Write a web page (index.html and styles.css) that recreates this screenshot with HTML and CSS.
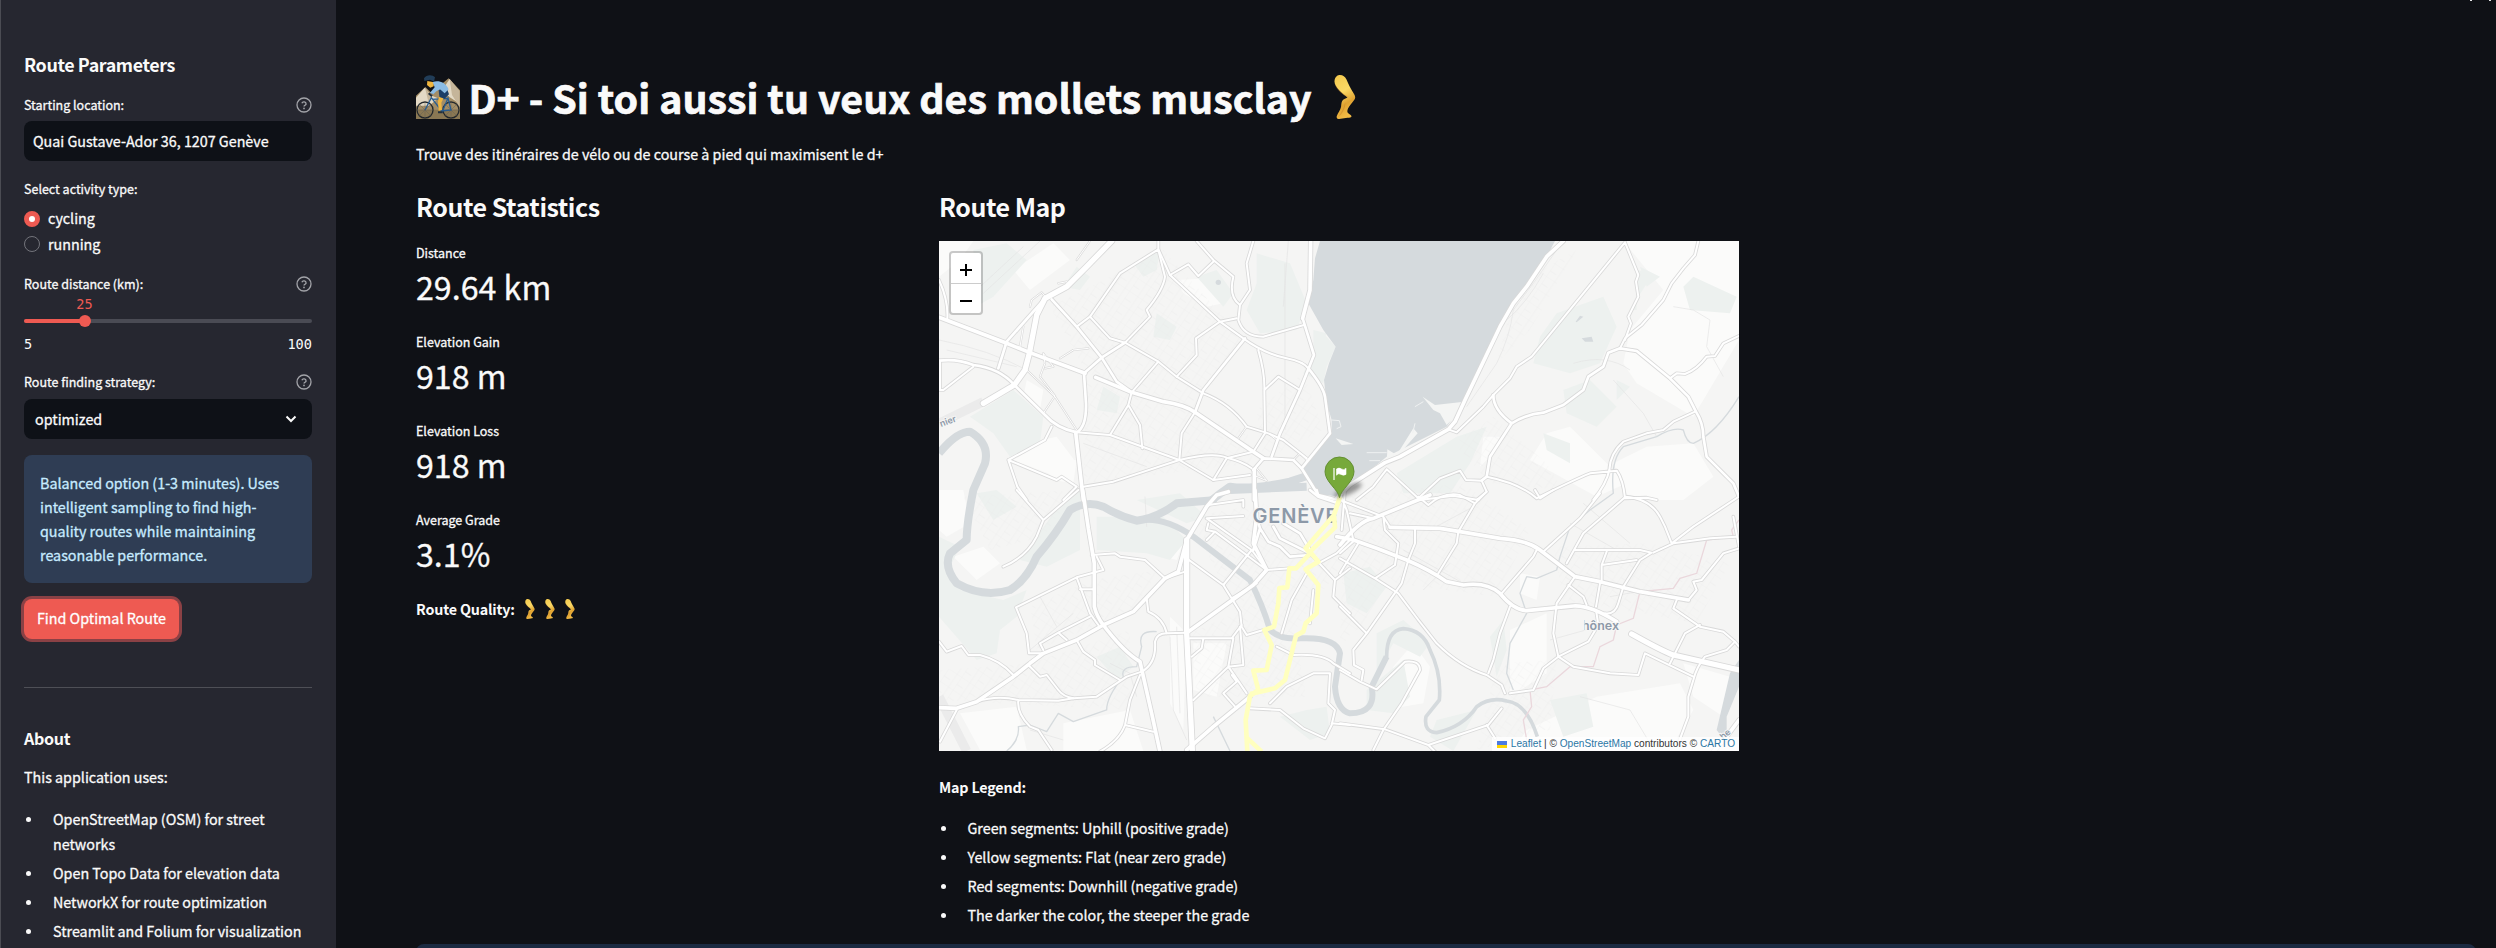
FILE: index.html
```html
<!DOCTYPE html>
<html lang="fr">
<head>
<meta charset="utf-8">
<title>D+ - Route planner</title>
<link rel="stylesheet" href="styles.css">
</head>
<body>
<svg class="defs" aria-hidden="true">
  <defs>
    <linearGradient id="skin" x1="0" y1="0" x2="0.3" y2="1"><stop offset="0" stop-color="#f3c84c"/><stop offset=".45" stop-color="#fbd965"/><stop offset=".75" stop-color="#e0a332"/><stop offset="1" stop-color="#f0b944"/></linearGradient>
    <symbol id="leg" viewBox="0 0 44 44">
      <path fill="url(#skin)" d="M11.500 6C12 1 15 0 17 0c3 0 5 1.500 6.500 4.500 2 5 4 9 7.500 14.500 1.500 2.500 1.500 4 .5 5.500-2 3-5 6-6.500 9-.8 2-1 3.500 0 4.500 1.500 1.500 3.500 2 3.500 3.500 0 1-2 1.200-4 1.200L16 44c-2 .1-2.700-1.500-2.200-3 1-3 3.700-6 4.200-9 .5-4 .5-6 2.500-7.500l4-2C20 19 11 12 11.500 6z"/>
      <path fill="#bd7926" opacity=".4" d="M15 42c4-5 6-10 7.500-15-.5 7-3 12-7.500 15zM12 9c3 6 8 10 14 13-5-1-13-7-14-13z"/>
    </symbol>
    <symbol id="help" viewBox="0 0 16 16">
      <circle cx="8" cy="8" r="7" fill="none" stroke="#a3a4a9" stroke-width="1.300"/>
      <path d="M5.900 6.300A2.150 2.150 0 0 1 10.100 6.900C10.100 8.200 8 8.300 8 9.500" fill="none" stroke="#a3a4a9" stroke-width="1.300"/>
      <circle cx="8" cy="11.400" r=".85" fill="#a3a4a9"/>
    </symbol>
  </defs>
</svg>
<div class="app">
  <aside class="sidebar">
    <h2 class="side-title">Route Parameters</h2>
    <div class="label-row location"><span>Starting location:</span><svg class="help"><use href="#help"/></svg></div>
    <div class="field">Quai Gustave-Ador 36, 1207 Genève</div>
    <div class="label-row activity"><span>Select activity type:</span></div>
    <div class="radio first"><i class="dot on"></i><span>cycling</span></div>
    <div class="radio"><i class="dot"></i><span>running</span></div>
    <div class="label-row distance"><span>Route distance (km):</span><svg class="help"><use href="#help"/></svg></div>
    <div class="slider">
      <div class="slider-value">25</div>
      <div class="track"><i class="fill"></i><i class="thumb"></i></div>
      <div class="ticks"><span>5</span><span>100</span></div>
    </div>
    <div class="label-row strategy"><span>Route finding strategy:</span><svg class="help"><use href="#help"/></svg></div>
    <div class="field select"><span>optimized</span><svg class="chevron" viewBox="0 0 12 8"><path d="M1.500 1.500 6 6 10.500 1.500"/></svg></div>
    <div class="info">Balanced option (1-3 minutes). Uses<br>intelligent sampling to find high-<br>quality routes while maintaining<br>reasonable performance.</div>
    <button class="find">Find Optimal Route</button>
    <hr class="rule">
    <h3 class="about">About</h3>
    <p class="uses">This application uses:</p>
    <ul class="list">
      <li>OpenStreetMap (OSM) for street<br>networks</li>
      <li>Open Topo Data for elevation data</li>
      <li>NetworkX for route optimization</li>
      <li>Streamlit and Folium for visualization</li>
    </ul>
  </aside>
  <main class="main">
    <div class="toolbar"><i></i><i></i></div>
    <h1 class="title">
      <svg class="bike" viewBox="0 0 132 132">
        <path fill="#a38d66" d="M0 62 28 36 50 58 76 28 98 10 132 46V132H0z"/>
        <path fill="#e3d9c5" d="M0 68 26 38 48 62 66 70 40 92H0zM78 46 101 12 120 48 128 84 100 66z"/>
        <path fill="#c5b59a" d="M27 38 47 64 38 84zM101 12 131 48V96L108 60z"/>
        <path fill="#8a7853" d="M0 104H132V132H0z"/>
        <g fill="none" stroke="#24292d" stroke-width="4"><circle cx="27" cy="105" r="24"/><circle cx="105" cy="105" r="24"/></g>
        <g fill="none" stroke="#5b5d58" stroke-width="1.200"><path d="M3 105H51M27 81V129M10 88 44 122M10 122 44 88M81 105H129M105 81V129M88 88 122 122M88 122 122 88"/></g>
        <path d="M27 105 46 68 79 110 96 69 105 105 77 108 50 73 94 70" fill="none" stroke="#285d91" stroke-width="4"/>
        <path fill="#f0b63e" d="M34 18 54 22 53 34 43 38 33 30zM70 58 86 62 76 83 78 105 68 107 66 80z"/>
        <path fill="#1d3f67" d="M68 44 92 38 99 58 86 71 70 66z"/>
        <path fill="#8bbce4" d="M50 21C66 16 88 20 98 43L86 55 72 43 61 49 52 58 42 53 56 37z"/>
        <path fill="#213d58" d="M24 10C31-2 50-1 57 7L54 20 42 14 25 18z"/>
        <path d="M38 55 48 64M66 112H80" stroke="#22303d" stroke-width="6"/>
      </svg>
      <span>D+ - Si toi aussi tu veux des mollets musclay</span>
      <svg class="leg-big"><use href="#leg"/></svg>
    </h1>
    <p class="subtitle">Trouve des itinéraires de vélo ou de course à pied qui maximisent le d+</p>
    <div class="columns">
      <section class="stats">
        <h2 class="section-title">Route Statistics</h2>
        <div class="metric"><div class="metric-label">Distance</div><div class="metric-value">29.64 km</div></div>
        <div class="metric"><div class="metric-label">Elevation Gain</div><div class="metric-value">918 m</div></div>
        <div class="metric"><div class="metric-label">Elevation Loss</div><div class="metric-value">918 m</div></div>
        <div class="metric"><div class="metric-label">Average Grade</div><div class="metric-value">3.1%</div></div>
        <div class="quality"><span>Route Quality:</span><svg><use href="#leg"/></svg><svg><use href="#leg"/></svg><svg><use href="#leg"/></svg></div>
      </section>
      <section class="map-col">
        <h2 class="section-title">Route Map</h2>
        <div class="map">
          <svg class="tiles" viewBox="0 0 800 510">
            <defs>
              <clipPath id="tile-edge"><rect x="645.500" y="360" width="80" height="40"/></clipPath>
              <pattern id="blocks" width="46" height="46" patternUnits="userSpaceOnUse" patternTransform="rotate(34)"><path d="M0 0H46M0 0V46M0 27H22M31 0V46" fill="none" stroke="#e9e9e9" stroke-width="1"/></pattern>
              <g id="roads">
                <g transform="translate(-9 -11) scale(.33333)">
                  <path class="r4" d="M545 33 470 110 410 170 345 205 320 255 298 370 285 420 253 465 160 520"/>
                  <path class="r3" d="M27 262 230 340 300 368 465 430M497 442 605 487 700 515Q765 525 795 547L970 665 1000 685"/>
                  <path class="r2" d="M365 208 440 290 515 383 560 455 605 487M345 205 230 335 205 415"/>
                  <path class="r2" d="M27 392Q80 385 130 405 210 415 253 465L345 555Q380 595 440 607 470 590 468 520L462 430 515 383 585 338"/>
                  <path class="r1" d="M585 338 660 260 650 240Q700 180 705 140L685 60V33M440 290 480 260 570 130 685 58"/>
                  <path class="r1" d="M685 58 720 135 870 275 940 325Q1000 370 1070 385 1120 395 1135 415"/>
                  <path class="r2" d="M1135 415Q1180 470 1185 500L1200 610 1115 715"/>
                  <path class="r1" d="M480 260 540 325 585 338 685 395 740 440 820 490Q900 520 950 590L1015 610 1060 630 1130 685"/>
                  <path class="r1" d="M720 135 775 103 805 138 850 95M800 33 850 90 910 140Q895 200 930 225L925 270Q940 320 1000 320L1122 285M970 33 950 100 960 180 930 225"/>
                  <path class="r3" d="M1142 33 1140 180 1118 265"/>
                  <path class="r2" d="M1118 265 1152 375 1110 480 1050 610 1025 680"/>
                  <path class="r1" d="M740 440 800 375 798 325 870 275 920 265M605 487 685 395M748 690 755 610 795 547"/>
                  <path class="r2" d="M945 325 820 480 795 547"/>
                  <path class="r1" d="M605 487 595 525 630 585 637 655M595 525 540 615M440 607 540 615 748 690 850 750M460 770 550 755 748 690Q850 665 890 683 940 695 965 715"/>
                  <path class="r3" d="M437 607 460 810M973 718V810"/>
                  <path class="r1" d="M365 590 345 630 235 690 262 770 290 810M235 690 380 750 395 740 440 770 400 810M30 480 40 480 130 410M30 480V395"/>
                  <path class="r1" d="M985 360Q1005 430 1003 480L1005 610 970 665 890 685 850 750 960 735M1003 480 1045 440 1110 480M27 150Q55 210 52 265"/>
                  <path class="r2" d="M970 720 1000 685 1090 690 1115 715 1165 795 1225 810"/>
                  <path class="r0" d="M340 550 375 498 330 440 345 400 340 370 370 410 345 415M390 385 430 360 475 355M300 230 305 210 335 187 350 205M385 160 410 155M280 290 270 350M290 420 375 500 440 600M925 625 950 590M1015 610 1040 630M1090 690 1110 670 1130 690M480 33 440 90M970 735 1010 752 980 715"/>
                </g>
                <g transform="translate(401 -11) scale(.33333)">
                  <path class="r3" d="M670 33 620 80 560 170 520 220 480 290 375 510 345 575 325 598 180 680 135 698 30 765-10 805"/>
                  <path class="r1" d="M855 37 575 380 530 410 510 445 460 495 430 530 350 607 325 598M855 37 895 135 888 155 895 200 865 260 873 280 855 330"/>
                  <path class="r1" d="M1075 33 1065 75 1030 115 995 160 970 210 905 285 855 325 840 355"/>
                  <path class="r2" d="M460 495Q460 540 515 580M840 355 805 368 790 410 745 440 730 480 670 525 610 548Q560 552 515 580L450 680 440 740 425 752M840 355 890 363 990 445 1045 500 1068 545Q1090 580 1090 620L1100 680 1180 760 1197 800"/>
                  <path class="r1" d="M990 445 1010 430 1035 432Q1070 420 1100 380L1125 378 1150 340 1197 318M1065 545 1000 575 970 600 920 610 850 635Q810 670 808 720"/>
                  <path class="r1" d="M140 718 235 805 300 745 360 722 378 750 425 752 440 785 410 810M50 810 100 770 140 718M440 740Q540 760 590 805 700 750 750 730L830 722Q850 750 855 805M808 720Q800 760 760 810M240 810 340 797 415 810M855 805 920 803 950 810"/>
                </g>
                <g transform="translate(-9 249) scale(.33333)">
                  <path class="r3" d="M458 0 475 115 493 220V350Q500 380 520 405 580 485 630 515L640 560 665 670 690 785"/>
                  <path class="r4" d="M770 150V430L787 780"/>
                  <path class="r3" d="M975 0 980 80 970 160 1010 240 970 285 775 425M27 653 80 655 140 635 250 560 300 520 340 490 440 450 520 405 610 365 705 265 745 245 770 150 830 50 860 15 895 5M770 780 850 710 960 620"/>
                  <path class="r1" d="M260 0 340 90 445 0M340 90 320 140Q290 200 220 230M485 195 555 190 570 200 645 210 705 265 765 245M500 200 520 240 440 262 258 352 290 430 297 490 340 490M440 262 480 370 505 405"/>
                  <path class="r1" d="M450 298H490M340 480 330 460 385 428 480 380M385 428 410 450M440 450 460 485 495 510 495 525 570 570M27 455 50 485 95 468 115 495 150 495Q210 510 250 555M295 525 330 560 350 555 385 600Q400 620 430 625L500 620 590 560 635 545Q680 520 675 455 680 430 710 430L770 428"/>
                  <path class="r1" d="M140 635Q200 615 265 630L385 632 430 625M265 630Q260 670 300 710L325 720 365 780M630 555 600 630 585 705Q570 750 510 785M585 705 670 725M80 660 30 755M650 325 655 365Q700 385 710 430"/>
                  <path class="r1" d="M770 205 880 285 965 180 830 85 940 78M880 285 930 365 935 410 950 435 1000 420M905 325 980 280M835 100 830 120 855 125 830 150M855 125 970 210 1010 240M835 45 940 30 940 50M965 180 1010 240 1080 235"/>
                  <path class="r1" d="M780 445 905 445 935 405M820 445 815 475 785 500M790 630 895 530 940 525 930 410M895 530 950 610M905 555 920 575 880 610 920 655M910 445 895 530"/>
                  <path class="r2" d="M980 80 990 115 1015 155 1050 170 1080 200 1140 195M990 115 970 180M1030 110 1050 145 1140 190M1060 100 1110 130 1140 180M1140 0 1165 20 1225 40M1165 20 1160 0"/>
                  <path class="r1" d="M1055 430 1085 330 1130 250M1150 300 1140 400M1090 495 1040 470M1090 495Q1180 490 1210 520L1260 550M960 655 1050 660 1120 715 1185 745 1205 705 1215 660 1195 640 1200 550 1150 550 1070 590 1020 640M1140 190 1215 270 1210 320 1260 370M1165 220 1220 190 1260 150M1215 270 1260 235M1205 700 1260 705"/>
                </g>
                <g transform="translate(401 249) scale(.33333)">
                  <path class="r3" d="M-10 140 40 150 110 175 200 210Q270 240 320 275L370 285Q440 275 480 310 520 360 560 362L700 348Q750 345 830 395"/>
                  <path class="r4" d="M875 432Q970 485 1000 495L1197 540"/>
                  <path class="r3" d="M0 165Q60 90 100 85L270 15M150 112 300 115 360 125 480 145Q560 150 600 180L705 260 780 275 900 305 1045 330"/>
                  <path class="r1" d="M0 30 130 80 150 112M235 20 265 45Q310 5 360 15L405 40 355 125 350 160 295 250M440 5 405 40M225 115 225 160 205 210 185 280 80 430 40 480 42 525 70 540 65 570M130 80 135 120 175 160 165 225 105 265M0 205 105 265 175 310 235 390 290 460Q360 530 440 555L485 585 495 610M0 350 80 430"/>
                  <path class="r1" d="M510 350 480 430 460 510 445 550M485 310 580 200 590 180M610 185 720 85 780 10M705 260 650 340 640 430 655 500 610 535 580 600 510 610M655 500 745 455 775 405 768 360"/>
                  <path class="r1" d="M680 220 730 130 855 22M705 180H900L935 188 900 210 850 290 835 340Q825 375 795 370M785 275V225L890 210M800 185 785 225M780 280 768 350M685 285 730 320 740 345M585 0 600 25 640 0"/>
                  <path class="r1" d="M855 20Q930 25 960 80L975 110 995 160 1060 110 1197 20M940 188 1000 160 1110 145 1190 140M1045 330 1070 300 1060 275 1085 270 1150 190 1197 175M1010 330 1000 355 1080 410 1150 425 1185 455 1197 470M1185 455 1160 480 1095 500Q1070 530 1060 570L1045 620 1045 680 1015 760M1080 405 1035 430 1000 500 990 520"/>
                  <path class="r1" d="M655 500 700 530 810 550 895 555 915 490 1060 560M0 540 60 575 110 598 195 515Q240 510 240 540L185 640 130 720 100 780M0 700 135 718 265 765 445 705 485 655M265 765 285 785M440 705 465 745M-5 0 20 60 40 150M15 0 5 120M30 70 100 85M55 160 0 250M0 190 45 150M1180 80 1197 170"/>
                  <path class="r3" d="M1197 690 1160 740 1120 785"/>
                </g>
              </g>
            </defs>
            <rect width="800" height="510" fill="#f5f5f4"/>
            <g transform="translate(-9 -11) scale(.33333)">
              <g fill="#fbfbfa">
                <path d="M27 33H130L90 90 27 140zM250 120 370 40 420 90 300 180zM740 150 840 145 880 220 830 230 760 190zM290 450 340 480 330 540 280 500zM290 640 380 620 440 700 380 740 250 690z"/>
                <path d="M2080 33H2427V330L2290 560 2120 460 2080 400 2100 300 2200 180zM1850 610 1920 590 2090 760 2000 800 1800 690zM2050 700 2150 650 2290 640 2350 740 2260 810H2100zM1660 620 1710 620 1700 660 1650 710z"/>
                <path d="M27 780H100L120 880 50 920 27 900zM70 980 160 950 210 1000 140 1050zM330 690H440L430 760 370 750zM650 930 720 900 760 940 740 990 660 970zM720 1160 770 1210 760 1500 720 1420zM790 1240H890L860 1400 790 1380zM90 1450 260 1430 290 1560H150zM400 1480 600 1440 640 1563H400z"/>
                <path d="M1390 1310 1450 1240 1500 1310 1480 1420 1360 1440zM1740 1200 1850 1150 1850 1330 1740 1400zM1790 1500 2000 1400 2250 1360 2290 1440 2220 1560H1750zM2260 1300 2400 1340 2380 1460 2290 1400zM1770 1030 1830 1040 1820 1110 1770 1090z"/>
              </g>
              <g fill="#edf1ef">
                <path d="M130 60 230 40 290 90 190 200 120 240 60 220 130 140zM610 100 690 60 680 120 640 140zM800 140 860 120 910 190 880 230zM980 70 1080 100 1130 220 1100 300 990 310 950 240 980 160zM1120 430 1180 310 1217 350 1190 410 1180 460zM1150 300 1190 310 1150 420z"/>
                <path d="M120 560 250 480 340 560 330 640 240 680 190 610zM440 110 480 140 450 180 400 170zM680 250 740 290 720 330 670 320zM520 470 570 500 560 550 500 540z"/>
                <path d="M1880 250 2020 200 2060 290 2010 400 1920 430 1810 400 1830 320zM2120 120 2170 130 2100 240 2120 240zM2290 140 2420 200 2400 250 2280 240 2260 170zM1900 480 1980 450 2060 530 2000 590 1910 550zM1840 610 1920 640 1920 700 1850 660zM1580 620 1670 590 1620 700 1560 790 1420 790 1400 730zM2130 110 2190 140 2150 170zM2060 450 2100 470 2060 510z"/>
                <path d="M27 920 90 950 60 1010 90 1080 220 1110 290 1080 260 1160 210 1200 200 1270 140 1290 27 1160zM270 990 370 850 450 780 450 960 350 1010zM500 860 700 860 770 930 720 990 650 970 500 960zM620 810 750 790 830 860 770 880zM140 790 200 780 260 830 190 870zM500 1280 570 1250 610 1310 560 1350z"/>
                <path d="M1240 1030 1320 1010 1370 1070 1310 1150 1250 1120zM1340 1210 1420 1170 1500 1240 1470 1280 1390 1240 1340 1330zM1310 1380 1420 1290 1440 1400 1390 1450 1310 1440zM1680 1220 1720 1170 1730 1260 1700 1340zM1860 1410 1970 1390 1990 1490 1900 1520zM1520 1470 1640 1440 1570 1563 1500 1520zM1130 1440 1190 1430 1200 1510 1140 1530 1050 1460z"/>
              </g>
              <g fill="url(#blocks)">
                <path d="M360 230 700 60 940 325 800 540 470 430zM470 450 950 600 970 700 460 760z"/>
                <path d="M980 540 1120 430 1180 600 1000 690zM780 860 1000 820 1240 1000 1080 1220 900 1110zM780 1210 1070 1080 1130 1400 800 1400z"/>
                <path d="M27 1320 300 1300 600 1200 600 1440 27 1410zM100 800 440 780 340 920 180 960zM300 1130 480 1050 690 1020 610 1140 320 1260z"/>
                <path d="M1230 800 1600 760 1800 900 1700 1100 1400 1060 1230 920zM1240 920 1400 1010 1300 1180 1230 1250zM1870 950 2160 940 2400 1000 2300 1180 1900 1110zM1700 1300 1880 1290 1860 1500 1640 1560z"/>
                <path d="M1570 640 1690 560 1850 700 1900 780 1680 760zM1760 160 1940 60 1800 300 1700 400z"/>
              </g>
              <g fill="none" stroke="#e4e4e4" stroke-width="2">
                <path d="M160 190 330 33M140 180 280 50M27 330Q180 360 290 420M50 360 260 410M1065 100V600M1075 33 1060 230M1880 60Q1820 150 1750 240 1740 320 1700 400L1610 530M1840 130Q1790 220 1730 270M2230 230 2290 240 2340 270 2330 350 2380 440M1930 400Q2030 370 2100 420M2050 450 2140 550 2180 620"/>
                <path d="M460 640 650 710M720 1220 730 1440 770 1530M740 1190 750 1450M650 890 645 800M430 1150 300 1260M330 1100 380 1190M540 1300 600 1330 620 1400M300 1500 400 1530M1420 960 1600 1060M1500 900 1630 830M1480 1080 1560 1000M1920 880 2060 960M1960 820 2100 940M2040 1100 2150 1080M1860 1230 2040 1180M1950 1400 2100 1440 2160 1540"/>
              </g>
              <path fill="#d5dadd" d="M1170 33 1155 85 1150 150 1135 220 1180 300 1217 350 1197 400 1182 450 1190 520 1205 570 1205 610 1115 715 1140 745 1168 793 1230 800 1270 762 1370 680 1550 590 1605 510 1710 290 1750 220 1850 80 1875 33z"/>
              <path fill="#f4f5f4" d="M1478 500 1515 525 1602 515 1575 560 1550 585 1530 550 1510 540zM1450 595 1463 610 1410 670 1370 700 1372 658 1400 675zM1217 625 1270 642 1235 645z"/>
              <path fill="none" stroke="#eff1f1" stroke-width="3" d="M1310 668H1370M1318 692H1350M1205 570 1228 572 1233 590 1220 596M1455 530 1480 515M1448 610 1455 580M1720 260 1735 255"/>
              <g fill="none" stroke="#d5dadd" stroke-linejoin="round">
                <path stroke-width="24" d="M27 670Q80 605 120 605 180 640 165 700L130 780Q110 880 110 930L60 970Q40 1010 80 1060 160 1105 240 1080 290 1050 320 980 380 910 420 840 470 810 520 830 570 860 620 872 680 865 740 820L860 810"/>
                <path stroke-width="18" d="M640 870Q710 865 790 920L960 1050Q1000 1130 1020 1200 1050 1230 1110 1225 1220 1220 1230 1270L1215 1370Q1220 1440 1260 1450 1340 1450 1325 1370L1370 1280"/>
                <path stroke-width="11" d="M1325 1375 1370 1280Q1370 1200 1420 1196 1480 1200 1500 1260 1535 1330 1528 1410L1488 1460Q1480 1505 1520 1508 1600 1490 1640 1430 1680 1400 1730 1413 1790 1420 1822 1520"/>
                <path stroke-width="24" d="M1140 735 1080 755Q960 780 900 770 870 790 840 815M900 780 1130 770"/>
                <path stroke-width="4" d="M230 1563Q270 1530 265 1490L300 1485 350 1505 385 1450 430 1475 530 1440Q530 1400 580 1340 570 1310 620 1310L635 1250Q620 1200 680 1205M850 1460 900 1563"/>
                <path stroke-width="4" d="M2427 500Q2360 610 2290 640 2270 640 2260 600 2230 590 2180 620L2080 650Q2040 690 2050 790L1980 840 1920 890 1890 980 1880 1020 1820 1045 1790 1040 1770 1090 1790 1150 1740 1240 1730 1330 1750 1380"/>
              </g>
              <g fill="#d5dadd"><circle cx="865" cy="157" r="8"/><path d="M1937 275 1950 257 1960 260 1940 277zM1955 325 1985 320 1990 335 1965 335z"/><path d="M2400 1330 2427 1290V1370L2390 1460 2390 1540 2360 1500z"/></g>
              <path fill="none" stroke="#ead7dc" stroke-width="4" d="M2427 870 2405 900 2410 920 2330 930 2300 1030 2250 1045 2230 1075 2130 1085 2110 1165 2060 1185 2050 1230 2010 1250 1990 1310 1920 1310 1850 1370 1800 1380 1805 1430 1780 1470 1790 1530"/>
              <path fill="none" stroke="#ebebeb" stroke-width="28" d="M27 580 160 515M27 1400 110 1563"/>
            </g>
            <use href="#roads" class="casing"/>
            <use href="#roads" class="surface"/>
            <g class="place">
              <text x="313.500" y="281.500" textLength="85" font-size="20">GENÈVE</text>
              <text x="643" y="389" font-size="12.500" textLength="37" clip-path="url(#tile-edge)">hônex</text>
              <text x="2" y="186" font-size="9" transform="rotate(-20 2 186)">nier</text>
              <text x="784" y="499" font-size="9" transform="rotate(-40 784 499)">he</text>
            </g>
            <g class="ride" transform="translate(-9 249) scale(.33333)">
              <path d="M1230 20 1212 75 1127 175 1140 190 1098 235 1078 235 1072 292 1048 294 1045 340 1032 410 1003 420 1025 465 1010 540 970 542 985 600 960 618 947 690 952 785M1212 75 1215 112 1140 185 1165 215 1127 238 1165 285 1160 370 1127 400 1120 425 1098 437 1065 570 1035 595 960 612M947 740 995 785"/>
            </g>
            <ellipse cx="409" cy="249" rx="15" ry="4.500" transform="rotate(-25 409 249)" fill="#333" opacity=".5" class="pin-shadow"/>
            <path d="M400.500 256.500C399 248 386 241 386 230.500a14.500 14.500 0 0 1 29 0C415 241 402 248 400.500 256.500z" fill="#77a93a" stroke="#638f31"/>
            <path d="M395 227V239" fill="none" stroke="#fff" stroke-width="1.200"/>
            <path d="M397.500 228q2.500-1.800 5 0t4.500-.8v6.200q-2.500 1.600-5 0t-4.500.8z" fill="#fff" stroke="#fff" stroke-width=".6"/>
          </svg>
          <div class="zoom"><span><svg viewBox="0 0 12 12"><path d="M6 0V12M0 6H12"/></svg></span><span><svg viewBox="0 0 12 12"><path d="M0 6H12"/></svg></span></div>
          <div class="attribution"><i class="flag"></i><a>Leaflet</a><span>|</span><span>©</span><a>OpenStreetMap</a><span>contributors ©</span><a>CARTO</a></div>
        </div>
        <p class="legend-title">Map Legend:</p>
        <ul class="list legend">
          <li>Green segments: Uphill (positive grade)</li>
          <li>Yellow segments: Flat (near zero grade)</li>
          <li>Red segments: Downhill (negative grade)</li>
          <li>The darker the color, the steeper the grade</li>
        </ul>
      </section>
    </div>
    <div class="notice"></div>
  </main>
</div>
</body>
</html>
```
FILE: styles.css
```css
* { box-sizing: border-box; }
body {
  margin: 0;
  overflow: hidden;
  background: #0f1116;
  color: #fafafa;
  font: 14.3px/24px "Noto Sans CJK SC", "Noto Sans", sans-serif;
  -webkit-text-stroke: 0.3px;
}
h1, h2, h3, p, ul { margin: 0; padding: 0; }
svg { display: block; flex: none; }
.defs { position: absolute; width: 0; height: 0; }
.app { display: flex; width: 2496px; height: 948px; overflow: hidden; }

/* Sidebar */
.sidebar { flex: none; width: 336px; height: 948px; padding: 52px 24px 0 23px; border-left: 1px solid #4b4c53; background: #262730; overflow: hidden; }
.side-title { font-size: 17.9px; line-height: 24px; letter-spacing: -0.4px; -webkit-text-stroke: 0; }
.label-row { display: flex; justify-content: space-between; align-items: center; height: 20px; font-size: 12.5px; line-height: 20px; }
.location { margin-top: 19px; }
.activity { margin: 18px 0 7px; }
.distance { margin-top: 18px; }
.strategy { margin-top: 18px; }
.help { width: 16px; height: 16px; }
.field { display: flex; align-items: center; height: 40px; margin-top: 6px; padding: 0 9px; border-radius: 8px; background: #0e1117; }
.select { justify-content: space-between; margin-top: 7px; padding: 0 15px 0 11px; }
.chevron { width: 12px; height: 8px; margin-top: -1px; fill: none; stroke: #fafafa; stroke-width: 2; }
.radio { display: flex; align-items: center; gap: 8px; height: 25px; }
.radio.first span { margin-top: -2px; }
.dot { width: 16px; height: 16px; border: 1px solid #73747b; border-radius: 50%; }
.dot.on { border: 5px solid #ee5a52; background: #fff; }
.slider { font-family: "DejaVu Sans Mono", monospace; line-height: 20px; -webkit-text-stroke: 0; }
.slider-value { width: 121px; text-align: center; color: #ee5a52; font-size: 13.5px; }
.track { position: relative; height: 4px; margin-top: 5px; border-radius: 4px; background: #4a4b54; }
.fill { display: block; width: 60px; height: 4px; border-radius: 4px; background: #ee5a52; }
.thumb { position: absolute; left: 55px; top: -4px; width: 12px; height: 12px; border-radius: 50%; background: #ee5a52; }
.ticks { display: flex; justify-content: space-between; height: 20px; margin-top: 11px; font-size: 13.6px; }
.info { height: 128px; margin-top: 16px; padding: 16px; border-radius: 8px; background: #2f3d54; color: #c7ebff; }
.find { display: block; width: 155px; height: 40px; margin-top: 16px; padding: 0 0 2px; border: 0; border-radius: 8px; background: #ee5a52; box-shadow: 0 0 0 3px #8b4145; color: #fff; font: inherit; line-height: 38px; -webkit-text-stroke: 0.3px; }
.rule { height: 1px; margin: 48px 0 38px; border: 0; background: #4e4f56; }
.about { font-size: 16.1px; letter-spacing: -0.3px; -webkit-text-stroke: 0; }
.uses { margin-top: 15px; }
.list { padding-left: 29px; margin-top: 17px; list-style: none; line-height: 25px; }
.list li { position: relative; margin-bottom: 4px; white-space: nowrap; }
.list li::before { content: ""; position: absolute; left: -27px; top: 11px; width: 5px; height: 5px; border-radius: 50%; background: #fafafa; }

/* Main */
.main { position: relative; flex: 1; padding: 70px 0 0 80px; }
.toolbar { position: absolute; top: 0; right: 5px; display: flex; gap: 17px; }
.toolbar i { width: 2px; height: 1px; background: #e6e7e9; }
.title { display: flex; height: 53px; font-size: 39.3px; line-height: 53px; letter-spacing: 0.03px; -webkit-text-stroke: 0.7px; }
.bike, .leg-big { width: 44px; height: 44px; margin-top: 5px; }
.bike { margin-right: 8.5px; }
.leg-big { margin-left: 11.5px; }
.subtitle { margin-top: 19px; }
.columns { display: flex; margin-top: 23px; }
.stats { width: 523px; }
.section-title { height: 34px; font-size: 25px; line-height: 34px; letter-spacing: -0.48px; -webkit-text-stroke: 0; }
.stats .section-title { margin-bottom: 18.5px; }
.metric { margin-bottom: 22px; }
.metric-label { font-size: 12.5px; line-height: 22px; }
.metric-value { font-size: 32.2px; line-height: 45px; }
.quality { display: flex; margin-top: -1px; }
.quality, .legend-title { font-weight: 700; letter-spacing: -0.17px; -webkit-text-stroke: 0; }
.quality span { margin-right: 5px; }
.quality svg { width: 20px; height: 20px; margin-top: 2.5px; }
.map-col { width: 800px; }
.map { position: relative; width: 800px; height: 510px; margin-top: 18px; overflow: hidden; -webkit-text-stroke: 0; }
.tiles { width: 800px; height: 510px; }
.casing { stroke: #d9d9d9; --grow: 5px; }
.surface { stroke: #fff; --grow: 0px; }
#roads { fill: none; stroke-linecap: round; stroke-linejoin: round; }
.r0 { stroke-width: calc(3px + var(--grow) * 0.7); }
.r1 { stroke-width: calc(6px + var(--grow)); }
.r2 { stroke-width: calc(8px + var(--grow)); }
.r3 { stroke-width: calc(11px + var(--grow)); }
.r4 { stroke-width: calc(16px + var(--grow)); }
.place { fill: #8d99a8; stroke: #f6f6f5; stroke-width: 2px; paint-order: stroke; font-family: Inter, sans-serif; font-weight: 600; }
.ride { fill: none; stroke: #ffffbf; stroke-width: 14; stroke-linejoin: round; }
.pin-shadow { filter: blur(2px); }
.zoom { position: absolute; left: 10px; top: 10px; width: 34px; height: 64px; border: 2px solid rgba(0, 0, 0, 0.2); border-radius: 4px; background: #fff; background-clip: padding-box; }
.zoom span { display: flex; align-items: center; justify-content: center; height: 30px; }
.zoom span:first-child { height: 31px; border-bottom: 1px solid #ccc; padding-top: 4px; }
.zoom span:first-child svg { margin-top: 0; }
.zoom svg { width: 12px; height: 12px; margin-top: 3px; stroke: #000; stroke-width: 2; }
.attribution { position: absolute; right: 0; bottom: 0; display: flex; align-items: center; gap: 2.8px; width: 247px; height: 14px; padding-left: 5px; background: rgba(255, 255, 255, 0.8); color: #333; font: 10.15px/14px "Liberation Sans", Arial, sans-serif; white-space: nowrap; }
.attribution a { color: #2b77a5; }
.flag { width: 10px; height: 7px; margin-right: 1px; background: linear-gradient(#4c7be1 50%, #ffd500 50%); }
.legend-title { margin-top: 24px; }
.legend { margin-top: 16px; padding-left: 28.5px; }
.notice { position: absolute; left: 80px; right: 20px; top: 944px; height: 60px; border-radius: 8px; background: #1b2a41; }
```
